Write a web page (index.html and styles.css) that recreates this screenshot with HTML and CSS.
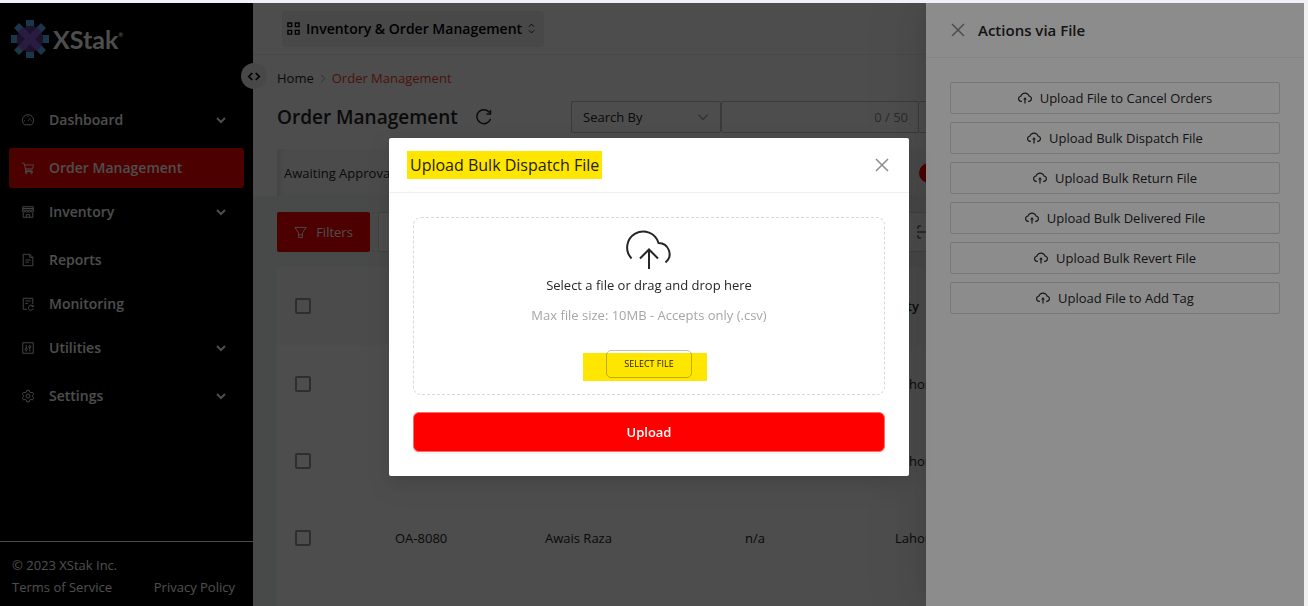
FILE: index.html
```html
<!DOCTYPE html>
<html lang="en">
<head>
    <meta charset="UTF-8">
    <meta name="viewport" content="width=device-width, initial-scale=1.0">
    <title>XStak - Order Management</title>
    <link rel="stylesheet" href="styles.css">
</head>
<body>
    <!-- Shared icons -->
    <svg class="sprite" aria-hidden="true">
        <symbol id="cloud" viewBox="64 64 896 896">
            <path d="M518.3 459a8 8 0 00-12.6 0l-112 141.7a7.98 7.98 0 006.3 12.9h73.9V856c0 4.4 3.6 8 8 8h60c4.4 0 8-3.6 8-8V613.7H624c6.7 0 10.4-7.7 6.3-12.9L518.3 459z"/>
            <path d="M811.4 366.7C765.6 245.9 648.9 160 512.2 160S258.8 245.8 213 366.6C127.3 389.1 64 467.2 64 560c0 110.5 89.5 200 199.9 200H304c4.4 0 8-3.6 8-8v-60c0-4.4-3.6-8-8-8h-40.1c-33.7 0-65.4-13.4-89-37.7-23.5-24.2-36-56.8-34.9-90.6.9-26.4 9.9-51.2 26.2-72.1 16.7-21.3 40.1-36.8 66.1-43.7l37.9-9.9 13.9-36.6c8.6-22.8 20.6-44.1 35.7-63.4a245.6 245.6 0 0152.4-49.9c41.1-28.9 89.5-44.2 140-44.2s98.9 15.3 140 44.2c19.9 14 37.5 30.8 52.4 49.9 15.1 19.3 27.1 40.7 35.7 63.4l13.8 36.5 37.8 10C846.1 454.5 884 503.8 884 560c0 33.1-12.9 64.3-36.3 87.7a123.07 123.07 0 01-87.6 36.3H720c-4.4 0-8 3.6-8 8v60c0 4.4 3.6 8 8 8h40.1C870.5 760 960 670.5 960 560c0-92.7-63.1-170.7-148.6-193.3z"/>
        </symbol>
        <symbol id="chevron" viewBox="0 0 12 12">
            <path d="M2 4l4 4 4-4"/>
        </symbol>
        <symbol id="close" viewBox="0 0 14 14">
            <path d="M1 1l12 12M13 1L1 13"/>
        </symbol>
    </svg>

    <div class="app">
        <aside class="sidebar">
            <div class="logo">
                <svg class="logo-mark" viewBox="0 0 38 38">
                    <g fill="#5ab4f0">
                        <path d="M15 0h8v6h-8zM15 32h8v6h-8zM0 15h6v8H0zM32 15h6v8h-6z"/>
                        <path d="M3 8l5-5 5 5-5 5zM25 8l5-5 5 5-5 5zM3 30l5-5 5 5-5 5zM25 30l5-5 5 5-5 5z"/>
                    </g>
                    <path fill="#5b4192" d="M15 6h8l9 9v8l-9 9h-8l-9-9v-8z"/>
                    <path fill="#8a5fd6" d="M12 7l7 7 7-7 5 5-7 7 7 7-5 5-7-7-7 7-5-5 7-7-7-7z"/>
                </svg>
                <span class="logo-text">XStak<sup>®</sup></span>
            </div>
            <nav class="menu">
                <a class="menu-item has-children" href="#">
                    <svg class="menu-icon" viewBox="0 0 16 16"><path d="M4 13.500a6.500 6.500 0 1 1 8 0zM8 9l3-3M3.500 9h1M11.500 9h1M8 3.500v1M4.700 5.200l.7.7"/></svg>
                    <span>Dashboard</span>
                    <svg class="menu-arrow"><use href="#chevron"/></svg>
                </a>
                <a class="menu-item active" href="#">
                    <svg class="menu-icon" viewBox="0 0 16 16"><path d="M1 2.500h2.500l2 8h7.500M4 4.500h10.500l-1.500 4.500H5M5.500 10.500l-.7 1.500h8.700"/><circle cx="6" cy="13.500" r="1"/><circle cx="12" cy="13.500" r="1"/></svg>
                    <span>Order Management</span>
                </a>
                <a class="menu-item has-children" href="#">
                    <svg class="menu-icon" viewBox="0 0 16 16"><path d="M2 2h12v4H2zM2 4h12M2.500 8.500V14h11V8.500M1.500 6v1.500q1.500 1.500 3.200 0 1.600 1.500 3.300 0 1.700 1.500 3.300 0 1.700 1.500 3.200 0V6M6 14v-3h4v3"/></svg>
                    <span>Inventory</span>
                    <svg class="menu-arrow"><use href="#chevron"/></svg>
                </a>
                <a class="menu-item" href="#">
                    <svg class="menu-icon" viewBox="0 0 16 16"><path d="M2.500 1.500h7.500l3.500 3.500v9.500h-11zM10 1.500V5h3.500M5 8h6M5 10.500h4"/></svg>
                    <span>Reports</span>
                </a>
                <a class="menu-item" href="#">
                    <svg class="menu-icon" viewBox="0 0 16 16"><path d="M7 14H2.500V1.500h11V8M5 4.500h6M5 7.500h3M13.500 10.500a2.800 2.800 0 1 0 .5 2.500M14 9v2h-2"/></svg>
                    <span>Monitoring</span>
                </a>
                <a class="menu-item has-children" href="#">
                    <svg class="menu-icon" viewBox="0 0 16 16"><path d="M2 2h12v12H2zM6 4.500v4M6 11v1M10 4.500v1M10 8v4"/><circle cx="6" cy="9.700" r="1.200"/><circle cx="10" cy="6.700" r="1.200"/></svg>
                    <span>Utilities</span>
                    <svg class="menu-arrow"><use href="#chevron"/></svg>
                </a>
                <a class="menu-item has-children" href="#">
                    <svg class="menu-icon" viewBox="0 0 16 16"><path d="M6.600 1.500h2.800l.4 1.900 1.500.9 1.900-.6 1.300 2.300-1.400 1.300v1.600l1.400 1.300-1.300 2.300-1.900-.6-1.500.9-.4 1.900H6.600l-.4-1.900-1.500-.9-1.900.6-1.300-2.300 1.400-1.300V7.300L1.500 6l1.300-2.300 1.900.6 1.500-.9z"/><circle cx="8" cy="8.100" r="2.300"/></svg>
                    <span>Settings</span>
                    <svg class="menu-arrow"><use href="#chevron"/></svg>
                </a>
            </nav>
            <footer class="sidebar-footer">
                <div>© 2023 XStak Inc.</div>
                <div class="footer-links">
                    <a href="#">Terms of Service</a>
                    <a href="#">Privacy Policy</a>
                </div>
            </footer>
            <button class="collapse" aria-label="Toggle sidebar">
                <svg viewBox="0 0 16 10"><path d="M6 1L2 5l4 4M10 1l4 4-4 4"/></svg>
            </button>
        </aside>

        <main class="main">
            <header class="topbar">
                <button class="module-switch">
                    <svg class="grid-icon" viewBox="0 0 14 14"><path d="M1 1h4v4H1zM9 1h4v4H9zM1 9h4v4H1zM9 9h4v4H9z"/></svg>
                    Inventory &amp; Order Management
                    <svg class="sort-icon" viewBox="0 0 8 12"><path d="M1 4l3-3 3 3M1 8l3 3 3-3"/></svg>
                </button>
            </header>

            <section class="page-head">
                <nav class="breadcrumb">
                    <a href="#">Home</a>
                    <svg viewBox="0 0 6 10"><path d="M1 1l4 4-4 4"/></svg>
                    <a class="current" href="#">Order Management</a>
                </nav>
                <div class="title-row">
                    <div class="title">
                        <h1>Order Management</h1>
                        <button class="reload" aria-label="Reload">
                            <svg viewBox="0 0 16 16"><path d="M14.500 10A7 7 0 1 1 13.500 3.500M14.500 1v4h-4"/></svg>
                        </button>
                    </div>
                    <div class="search">
                        <div class="search-by">
                            <select aria-label="Search by">
                                <option>Search By</option>
                            </select>
                            <svg><use href="#chevron"/></svg>
                        </div>
                        <div class="search-input">
                            <input type="text" aria-label="Search" maxlength="50">
                            <span>0 / 50</span>
                        </div>
                        <button class="search-button" aria-label="Search"></button>
                    </div>
                </div>
                <div class="tabs">
                    <a href="#">Awaiting Approval</a>
                    <span class="badge"></span>
                </div>
            </section>

            <section class="content">
                <div class="toolbar">
                    <button class="filters">
                        <svg viewBox="0 0 14 14"><path d="M1 1.500h12l-4 6v5H5v-5zM5 9.500h4"/></svg>
                        Filters
                    </button>
                    <button class="tool" aria-label="Export"></button>
                    <button class="tool scan" aria-label="Scan">
                        <svg viewBox="0 0 14 14"><path d="M1 4V1h3M10 1h3v3M1 10v3h3M10 13h3v-3M0 7h14"/></svg>
                    </button>
                </div>
                <table class="orders">
                    <thead>
                        <tr>
                            <th class="col-check"><input type="checkbox" aria-label="Select all"></th>
                            <th class="col-id"></th>
                            <th class="col-name"></th>
                            <th class="col-tag"></th>
                            <th>City</th>
                        </tr>
                    </thead>
                    <tbody>
                        <tr>
                            <td><input type="checkbox" aria-label="Select order"></td>
                            <td></td>
                            <td></td>
                            <td></td>
                            <td>Lahore</td>
                        </tr>
                        <tr>
                            <td><input type="checkbox" aria-label="Select order"></td>
                            <td></td>
                            <td></td>
                            <td></td>
                            <td>Lahore</td>
                        </tr>
                        <tr>
                            <td><input type="checkbox" aria-label="Select order"></td>
                            <td>OA-8080</td>
                            <td>Awais Raza</td>
                            <td>n/a</td>
                            <td>Lahore</td>
                        </tr>
                        <tr>
                            <td></td>
                            <td></td>
                            <td></td>
                            <td></td>
                            <td></td>
                        </tr>
                    </tbody>
                </table>
            </section>
        </main>

        <div class="mask"></div>
        <aside class="drawer">
            <header class="drawer-head">
                <button class="close" aria-label="Close"><svg><use href="#close"/></svg></button>
                <h2>Actions via File</h2>
            </header>
            <div class="drawer-body">
                <button class="action"><svg><use href="#cloud"/></svg>Upload File to Cancel Orders</button>
                <button class="action"><svg><use href="#cloud"/></svg>Upload Bulk Dispatch File</button>
                <button class="action"><svg><use href="#cloud"/></svg>Upload Bulk Return File</button>
                <button class="action"><svg><use href="#cloud"/></svg>Upload Bulk Delivered File</button>
                <button class="action"><svg><use href="#cloud"/></svg>Upload Bulk Revert File</button>
                <button class="action"><svg><use href="#cloud"/></svg>Upload File to Add Tag</button>
            </div>
        </aside>

        <div class="mask modal-wrap">
            <div class="modal" role="dialog" aria-labelledby="modal-title">
                <header class="modal-head">
                    <h2 id="modal-title">Upload Bulk Dispatch File</h2>
                    <button class="close" aria-label="Close"><svg><use href="#close"/></svg></button>
                </header>
                <div class="modal-body">
                    <div class="dropzone">
                        <svg class="drop-icon" viewBox="0 0 48 40"><path d="M6.500 28.500A16 16 0 1 1 33.500 13A11 11 0 0 1 40.500 32.500M24 39V20M15 28.500l9-9 9 9"/></svg>
                        <p>Select a file or drag and drop here</p>
                        <p class="hint">Max file size: 10MB - Accepts only (.csv)</p>
                        <div class="select-file">
                            <button>SELECT FILE</button>
                        </div>
                    </div>
                    <button class="upload">Upload</button>
                </div>
            </div>
        </div>
    </div>
</body>
</html>
```
FILE: styles.css
```css
* {
    box-sizing: border-box;
}

body {
    display: flex;
    height: 100vh;
    margin: 0;
    border-top: 3px solid #f0effa;
    border-right: 4px solid #f1f1f1;
    font-family: 'Open Sans', 'Noto Sans', sans-serif;
    font-size: 13px;
    line-height: 22px;
    color: #262626;
    overflow: hidden;
}

h1, h2, p {
    margin: 0;
}

a {
    color: inherit;
    text-decoration: none;
}

button, input, select {
    font: inherit;
    color: inherit;
    cursor: pointer;
}

button {
    padding: 0;
    background: none;
    border: none;
}

svg {
    flex: none;
    fill: none;
    stroke: currentColor;
}

.sprite {
    position: absolute;
    width: 0;
    height: 0;
}

.app {
    position: relative;
    display: flex;
    flex: 1;
    min-width: 0;
    overflow: hidden;
}

/* Sidebar */
.sidebar {
    position: relative;
    display: flex;
    flex-direction: column;
    flex: none;
    width: 253px;
    background-color: #000;
    color: #fff;
}

.logo {
    display: flex;
    align-items: center;
    gap: 4px;
    height: 97px;
    padding: 0 11px 25px;
}

.logo-mark {
    width: 38px;
    height: 38px;
    stroke: none;
}

.logo-text {
    font-family: Lato, sans-serif;
    font-size: 25px;
    font-weight: bold;
}

.logo-text sup {
    font-size: 6px;
    line-height: 1;
    vertical-align: 12px;
}

.menu {
    flex: 1;
    padding: 0 9px;
}

.menu-item {
    display: flex;
    align-items: center;
    gap: 14px;
    height: 40px;
    margin-bottom: 4px;
    padding: 0 17px 0 12px;
    border-radius: 3px;
    font-size: 14px;
    font-weight: 600;
}

.menu-item.has-children {
    margin-bottom: 8px;
}

.menu-item.active {
    background-color: #f00;
}

.menu-icon {
    width: 14px;
    height: 14px;
}

.menu-arrow {
    width: 12px;
    height: 12px;
    margin-left: auto;
    stroke-width: 2;
}

.sidebar-footer {
    height: 65px;
    padding: 12px 18px 0 12px;
    border-top: 1px solid #fff;
}

.footer-links {
    display: flex;
    justify-content: space-between;
}

.collapse {
    position: absolute;
    top: 60px;
    right: -14px;
    z-index: 1;
    display: flex;
    align-items: center;
    justify-content: center;
    width: 26px;
    height: 26px;
    border-radius: 50%;
    background-color: #f0f0f0;
    color: #000;
}

.collapse svg {
    width: 14px;
    height: 9px;
    stroke-width: 2;
}

/* Main area */
.main {
    display: flex;
    flex-direction: column;
    flex: 1;
    min-width: 0;
    background-color: #f0f2f5;
}

.topbar {
    display: flex;
    flex: none;
    align-items: center;
    height: 52px;
    padding: 0 29px;
    background-color: #fff;
    border-bottom: 1px solid #eee;
}

.module-switch {
    display: flex;
    align-items: center;
    gap: 6px;
    height: 36px;
    padding: 0 9px 0 5px;
    border-radius: 4px;
    background-color: #f0f0f0;
    color: #000;
    font-size: 14px;
    font-weight: 600;
}

.grid-icon {
    width: 13px;
    height: 13px;
    stroke-width: 1.5;
}

.sort-icon {
    width: 7px;
    height: 11px;
}

.page-head {
    flex: none;
    padding: 12px 24px 0;
    background-color: #fff;
}

.breadcrumb {
    display: flex;
    align-items: center;
    gap: 6px;
}

.breadcrumb svg {
    width: 6px;
    height: 9px;
    color: #999;
}

.breadcrumb .current {
    color: #f5431f;
    font-weight: 500;
}

.title-row {
    display: flex;
    margin-top: 12px;
}

.title {
    display: flex;
    flex: none;
    align-items: center;
    gap: 18px;
    width: 294px;
}

h1 {
    font-size: 19px;
    font-weight: 600;
    line-height: 32px;
}

.reload svg {
    display: block;
    width: 16px;
    height: 16px;
    stroke-width: 1.5;
}

.search {
    display: flex;
}

.search-by, .search-input, .search-button {
    display: flex;
    align-items: center;
    height: 32px;
    border: 1px solid #c4c4c4;
    border-radius: 2px;
}

.search-by {
    position: relative;
    width: 150px;
}

.search-by select {
    width: 100%;
    height: 100%;
    padding: 0 11px;
    border: none;
    background: none;
    appearance: none;
}

.search-by svg {
    position: absolute;
    right: 10px;
    width: 14px;
    height: 14px;
    color: #999;
    stroke-width: 1;
}

.search-input {
    width: 198px;
    padding: 0 10px;
    color: #8c8c8c;
}

.search-input input {
    flex: 1;
    min-width: 0;
    border: none;
    background: none;
}

.search-button {
    width: 32px;
    border-left: none;
}

.tabs {
    display: grid;
    grid-template-columns: 635px 20px;
    align-items: center;
    height: 47px;
    margin-top: 16px;
    padding: 0 7px;
    background-color: #fafafa;
    box-shadow: inset 6px -2px 6px -4px #ddd;
}

.badge {
    height: 20px;
    border-radius: 10px;
    background-color: #f00;
}

.content {
    flex: 1;
    padding: 16px 24px;
}

.toolbar {
    display: flex;
    gap: 8px;
    margin-bottom: 15px;
}

.filters {
    display: flex;
    align-items: center;
    justify-content: center;
    gap: 9px;
    width: 93px;
    height: 40px;
    border-radius: 2px;
    background-color: #f00;
    color: #fff;
}

.filters svg {
    width: 13px;
    height: 13px;
}

.tool {
    display: flex;
    align-items: center;
    width: 130px;
    height: 40px;
    padding: 0 16px;
    border: 1px solid #d9d9d9;
    border-radius: 2px;
    background-color: #fff;
}

.tool.scan {
    margin-left: 384px;
}

.tool.scan svg {
    width: 14px;
    height: 14px;
}

.orders {
    width: 100%;
    border-collapse: collapse;
    table-layout: fixed;
    background-color: #fff;
}

.orders th, .orders td {
    height: 77px;
    padding: 0 18px;
    text-align: left;
}

.orders th {
    height: 78px;
    background-color: #fafafa;
    font-weight: 600;
}

.orders input {
    display: block;
    width: 16px;
    height: 16px;
    margin: 0;
    border: 2px solid #999;
    border-radius: 2px;
    appearance: none;
}

.col-check {
    width: 100px;
}

.col-id {
    width: 150px;
}

.col-name {
    width: 200px;
}

.col-tag {
    width: 150px;
}

/* Drawer and modal */
.mask {
    position: absolute;
    inset: 0;
    z-index: 2;
    background-color: rgba(0, 0, 0, 0.45);
}

.close svg {
    display: block;
    width: 14px;
    height: 14px;
    color: #8c8c8c;
    stroke-width: 1.5;
}

.drawer {
    position: absolute;
    top: 0;
    right: 0;
    bottom: 0;
    z-index: 2;
    width: 378px;
    background-color: #fff;
    box-shadow: -6px 0 16px -8px rgba(0, 0, 0, 0.08), -9px 0 28px rgba(0, 0, 0, 0.05), -12px 0 48px 16px rgba(0, 0, 0, 0.03);
}

.drawer-head {
    display: flex;
    align-items: center;
    gap: 13px;
    height: 55px;
    padding: 0 25px;
    border-bottom: 1px solid #f0f0f0;
}

h2 {
    font-size: 15px;
    font-weight: 600;
}

.drawer-body {
    display: flex;
    flex-direction: column;
    gap: 8px;
    padding: 24px;
}

.action {
    display: flex;
    align-items: center;
    justify-content: center;
    gap: 8px;
    height: 32px;
    border: 1px solid #d9d9d9;
    border-radius: 2px;
}

.action svg {
    width: 14px;
    height: 14px;
    fill: currentColor;
    stroke: none;
}

.modal-wrap {
    display: flex;
    align-items: flex-start;
    justify-content: center;
    padding: 135px 6px 0 0;
}

.modal {
    width: 520px;
    border-radius: 2px;
    background-color: #fff;
    box-shadow: 0 3px 6px -4px rgba(0, 0, 0, 0.12), 0 6px 16px rgba(0, 0, 0, 0.08), 0 9px 28px 8px rgba(0, 0, 0, 0.05);
}

.modal-head {
    display: flex;
    align-items: center;
    justify-content: space-between;
    height: 55px;
    padding: 0 20px 0 18px;
    border-bottom: 1px solid #f0f0f0;
}

.modal-head h2 {
    padding: 3px;
    background-color: #ffe600;
    color: #262200;
    font-size: 16px;
    font-weight: 500;
}

.modal-body {
    padding: 24px;
}

.dropzone {
    display: flex;
    flex-direction: column;
    align-items: center;
    height: 178px;
    margin-bottom: 17px;
    padding: 12px 0 16px;
    border: 1px dashed #d9d9d9;
    border-radius: 8px;
}

.drop-icon {
    width: 50px;
    height: 40px;
    margin-bottom: 4px;
    stroke-width: 2;
}

.hint {
    margin: 8px 0 24px;
    color: #a6a6a6;
}

/* marker laid over the button */
.select-file {
    position: relative;
}

.select-file::after {
    content: '';
    position: absolute;
    top: 3px;
    left: -23px;
    width: 124px;
    height: 28px;
    background-color: #ffe600;
    mix-blend-mode: multiply;
    pointer-events: none;
}

.select-file button {
    display: block;
    width: 86px;
    height: 28px;
    border: 1px solid #bfbfbf;
    border-radius: 5px;
    font-size: 9px;
}

.upload {
    display: block;
    width: 100%;
    height: 40px;
    border: 1px solid #ff6b6b;
    border-radius: 6px;
    background-color: #f00;
    box-shadow: 0 2px 0 rgba(0, 0, 0, 0.04);
    color: #fff;
    font-weight: 600;
}
```
